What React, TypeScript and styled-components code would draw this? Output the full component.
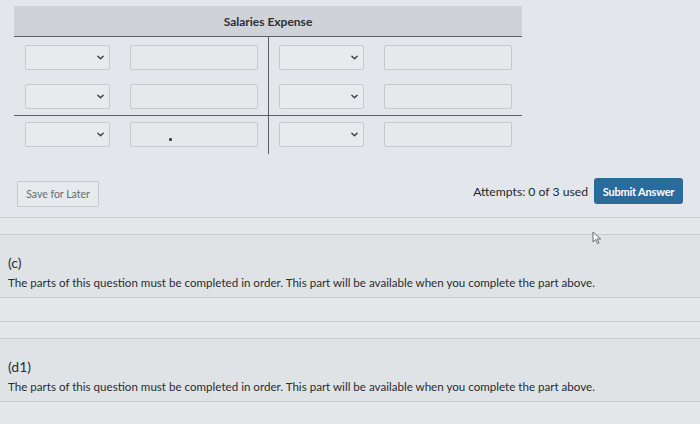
import styled, { createGlobalStyle } from "styled-components";

const GlobalStyle = createGlobalStyle`
    html, body {
        margin: 0;
        padding: 0;
        background: #e3e7eb;
    }
    body {
        font-family: Lato, "Open Sans", sans-serif;
        color: #2a2d30;
    }
`;

interface EntryRow {
    id: string;
    mark?: boolean;
}

const upperRows: EntryRow[] = [{id: "r1"}, {id: "r2"}];
const lowerRows: EntryRow[] = [{id: "r3", mark: true}];

const NOTE = "The parts of this question must be completed in order. This part will be available when you complete the part above.";

const App = () => {
    return (
        <>
            <GlobalStyle/>
            <Page>
                <TAccount>
                    <AccountHeader>Salaries Expense</AccountHeader>
                    <AccountSection>
                        <SideColumn $left>
                            {upperRows.map((row) => (
                                <EntryLine key={row.id}>
                                    <Dropdown><Chevron/></Dropdown>
                                    <AmountBox/>
                                </EntryLine>
                            ))}
                        </SideColumn>
                        <SideColumn>
                            {upperRows.map((row) => (
                                <EntryLine key={row.id}>
                                    <Dropdown><Chevron/></Dropdown>
                                    <AmountBox/>
                                </EntryLine>
                            ))}
                        </SideColumn>
                    </AccountSection>
                    <AccountSection $total>
                        <SideColumn $left $bottom>
                            {lowerRows.map((row) => (
                                <EntryLine key={row.id}>
                                    <Dropdown><Chevron/></Dropdown>
                                    <AmountBox>{row.mark && <Mark/>}</AmountBox>
                                </EntryLine>
                            ))}
                        </SideColumn>
                        <SideColumn $bottom>
                            {lowerRows.map((row) => (
                                <EntryLine key={row.id}>
                                    <Dropdown><Chevron/></Dropdown>
                                    <AmountBox/>
                                </EntryLine>
                            ))}
                        </SideColumn>
                    </AccountSection>
                </TAccount>

                <ActionBar>
                    <SaveButton>Save for Later</SaveButton>
                    <SubmitGroup>
                        <Attempts>Attempts: 0 of 3 used</Attempts>
                        <SubmitButton>Submit Answer</SubmitButton>
                    </SubmitGroup>
                </ActionBar>

                <Spacer $h={16}/>
                <PartBlock>
                    <PartLabel>(c)</PartLabel>
                    <PartNote>{NOTE}</PartNote>
                    <Pointer viewBox="0 0 10 14">
                        <path d="M1 1 L1 11 L3.6 8.6 L5.6 12.6 L7 11.9 L5.1 8 L8.6 8 Z" fill="#f4f6f8" stroke="#5a6068" strokeWidth="0.9" strokeLinejoin="round"/>
                    </Pointer>
                </PartBlock>
                <Spacer $h={23}/>
                <Spacer $h={16}/>
                <PartBlock>
                    <PartLabel>(d1)</PartLabel>
                    <PartNote>{NOTE}</PartNote>
                </PartBlock>
                <Spacer $h={30}/>
            </Page>
        </>
    );
};

const Chevron = () => (
    <ChevronIcon viewBox="0 0 8 5">
        <path d="M1 1 L4 4 L7 1" fill="none" stroke="#3b3f44" strokeWidth="1.6" strokeLinecap="round" strokeLinejoin="round"/>
    </ChevronIcon>
);

export default App;


const Page = styled.div`
    width: 700px;
    height: 424px;
    overflow: hidden;
    box-sizing: border-box;
    padding-top: 6px;
    background: #e3e7eb;
`;

const TAccount = styled.div`
    width: 508px;
    margin-left: 14px;
`;

const AccountHeader = styled.div`
    height: 30px;
    background: #cfd2d6;
    display: flex;
    align-items: center;
    justify-content: center;
    font-size: 12px;
    font-weight: 700;
    color: #2c2f33;
    border-bottom: 1.5px solid #5b5f64;
`;

const AccountSection = styled.div<{ $total?: boolean }>`
    display: grid;
    grid-template-columns: 255px 253px;
    border-top: ${(props) => (props.$total ? "1.5px solid #5b5f64" : "none")};
`;

const SideColumn = styled.div<{ $left?: boolean; $bottom?: boolean }>`
    display: flex;
    flex-direction: column;
    gap: 14px;
    padding: ${(props) => (props.$bottom ? "6px 0 7px" : "8px 0 6px")};
    padding-left: ${(props) => (props.$left ? "11px" : "10px")};
    border-right: ${(props) => (props.$left ? "1.5px solid #5b5f64" : "none")};
`;

const EntryLine = styled.div`
    display: flex;
    align-items: center;
    gap: 20px;
`;

const Dropdown = styled.div`
    width: 85px;
    height: 25px;
    box-sizing: border-box;
    border: 1px solid #c6cacd;
    border-radius: 2px;
    background: #e8ebee;
    display: flex;
    align-items: center;
    justify-content: flex-end;
    padding-right: 5px;
`;

const ChevronIcon = styled.svg`
    width: 7px;
    height: 5px;
`;

const AmountBox = styled.div`
    width: 128px;
    height: 25px;
    box-sizing: border-box;
    border: 1px solid #c6cacd;
    border-radius: 2px;
    background: #e6e9ec;
    display: flex;
    align-items: center;
    padding-left: 38px;
`;

const Mark = styled.span`
    width: 3px;
    height: 3px;
    background: #3b3f44;
    border-radius: 1px;
    margin-top: 9px;
`;

const ActionBar = styled.div`
    display: flex;
    justify-content: space-between;
    align-items: flex-start;
    padding: 24px 17px 0 17px;
    height: 39px;
    border-bottom: 1px solid #c9cdd1;
`;

const SaveButton = styled.button`
    margin-top: 3px;
    width: 82px;
    height: 26px;
    border: 1px solid #c6cace;
    border-radius: 2px;
    background: #e7eaed;
    font-family: Lato, sans-serif;
    font-size: 10.5px;
    color: #666b71;
    padding: 0;
`;

const SubmitGroup = styled.div`
    display: flex;
    align-items: center;
    gap: 6px;
`;

const Attempts = styled.span`
    font-size: 12.2px;
    color: #24272a;
`;

const SubmitButton = styled.button`
    width: 89px;
    height: 26px;
    border: none;
    border-radius: 3px;
    background: #2b6b9c;
    color: #ffffff;
    font-family: Lato, sans-serif;
    font-size: 11px;
    font-weight: 700;
    letter-spacing: -0.2px;
    padding: 0;
`;

const Spacer = styled.div<{ $h: number }>`
    height: ${(props) => props.$h}px;
    border-bottom: 1px solid #c9cdd1;
    background: #e5e8eb;
`;

const PartBlock = styled.div`
    position: relative;
    height: 63px;
    box-sizing: border-box;
    padding: 19px 8px 0;
    background: #dfe3e6;
    border-bottom: 1px solid #c9cdd1;
`;

const PartLabel = styled.div`
    font-size: 14px;
    line-height: 17px;
    color: #2a2d30;
`;

const PartNote = styled.div`
    margin-top: 5px;
    font-size: 11.6px;
    line-height: 14px;
    white-space: nowrap;
    color: #2a2d30;
`;

const Pointer = styled.svg`
    position: absolute;
    left: 592px;
    top: -4px;
    width: 10px;
    height: 14px;
`;
